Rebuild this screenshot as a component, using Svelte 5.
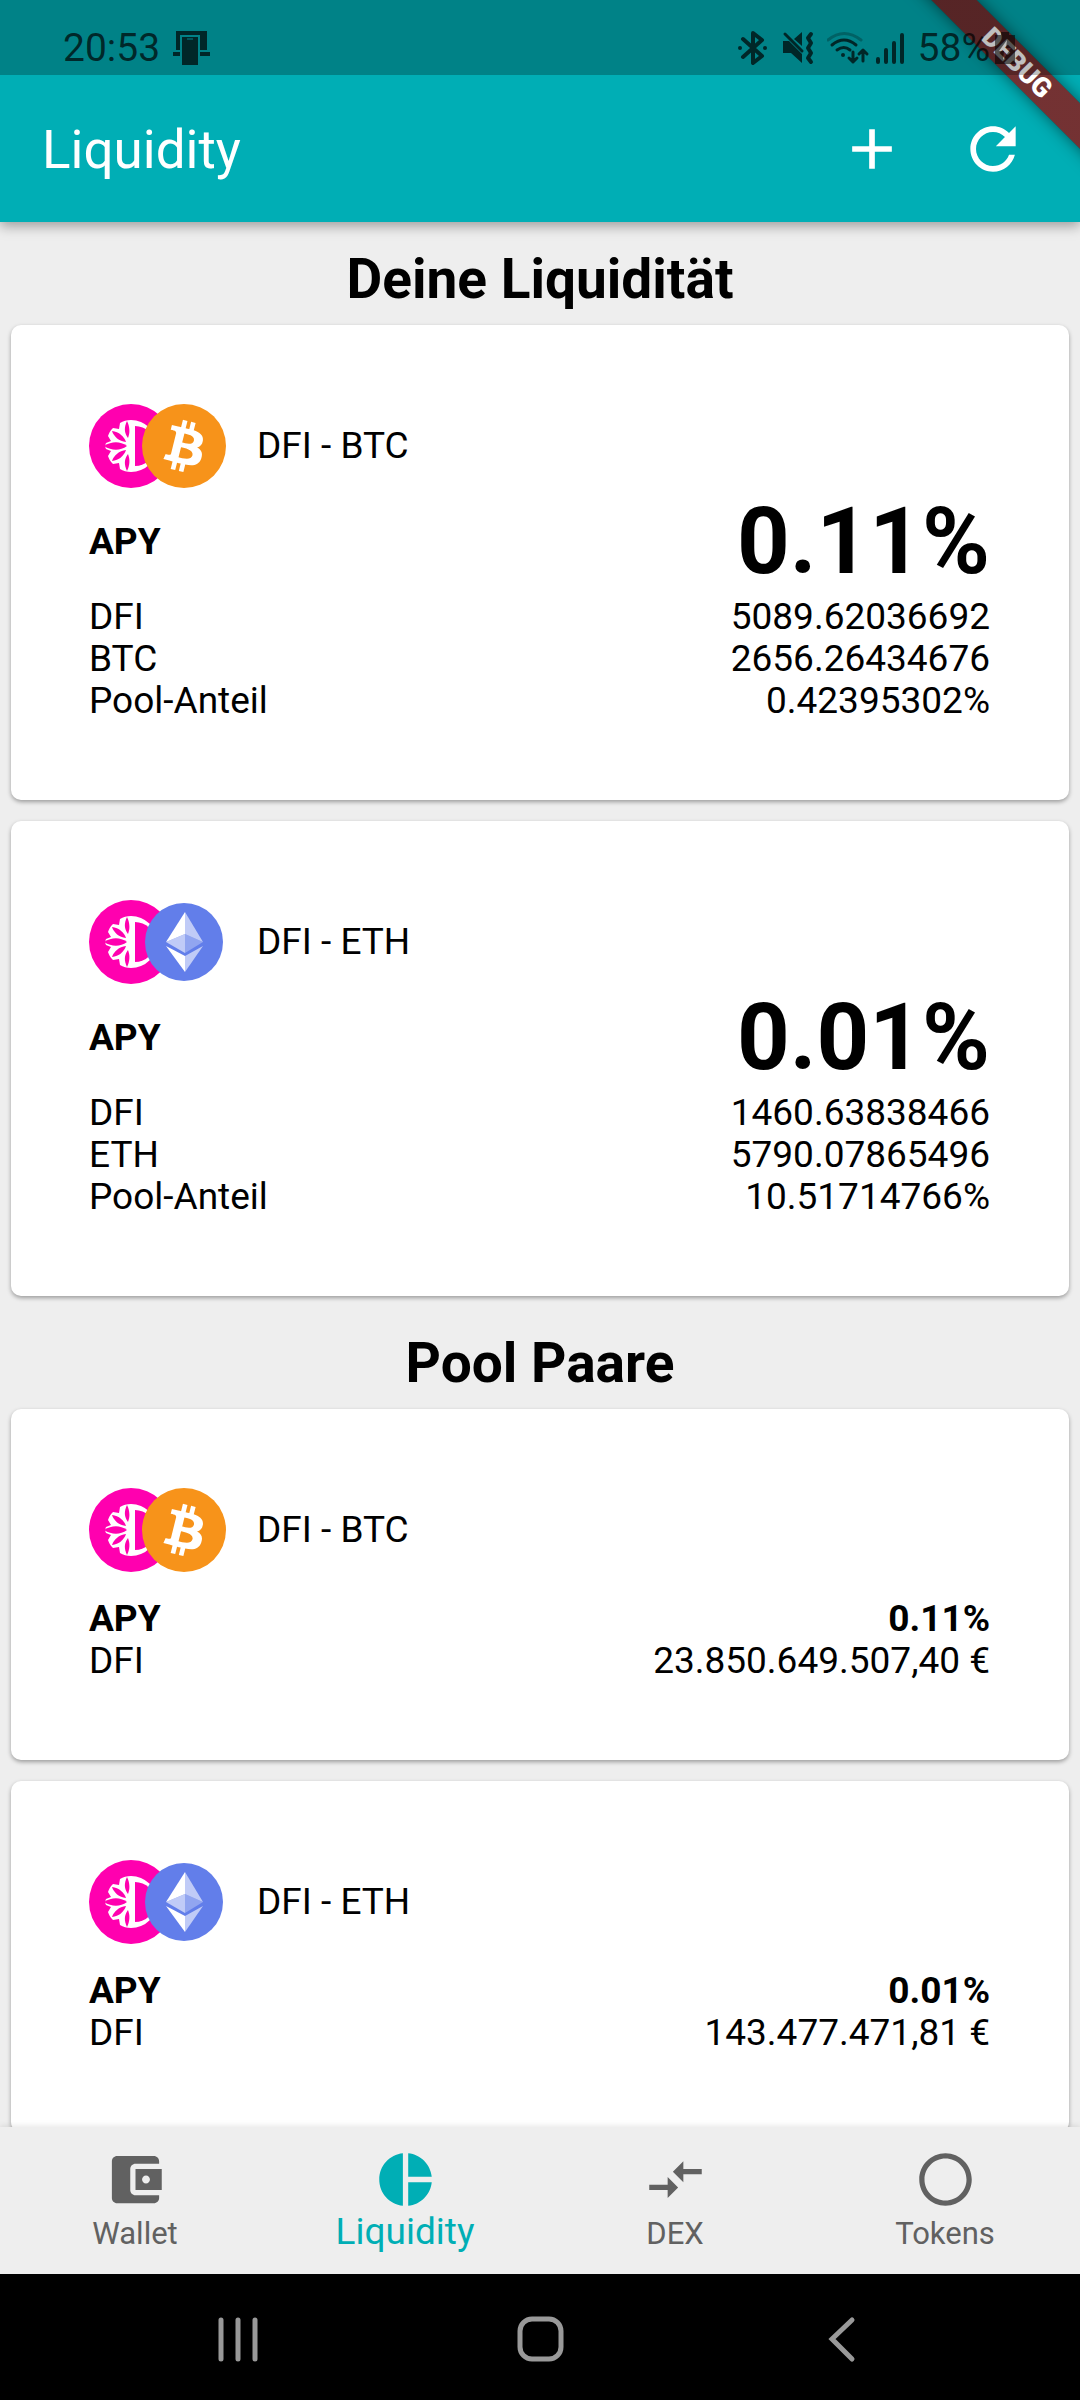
<script>
  const myPools = [
    {
      coin: "BTC",
      apy: "0.11%",
      rows: [
        ["DFI", "5089.62036692"],
        ["BTC", "2656.26434676"],
        ["Pool-Anteil", "0.42395302%"],
      ],
    },
    {
      coin: "ETH",
      apy: "0.01%",
      rows: [
        ["DFI", "1460.63838466"],
        ["ETH", "5790.07865496"],
        ["Pool-Anteil", "10.51714766%"],
      ],
    },
  ];

  const poolPairs = [
    { coin: "BTC", apy: "0.11%", rows: [["DFI", "23.850.649.507,40 €"]] },
    { coin: "ETH", apy: "0.01%", rows: [["DFI", "143.477.471,81 €"]] },
  ];

  const tabs = [
    {
      label: "Wallet",
      icon: "M21 18v1c0 1.1-.9 2-2 2H5c-1.11 0-2-.9-2-2V5c0-1.1.89-2 2-2h14c1.1 0 2 .9 2 2v1h-9c-1.11 0-2 .9-2 2v8c0 1.1.89 2 2 2h9zm-9-2h10V8H12v8zm4-2.5c-.83 0-1.5-.67-1.5-1.5s.67-1.5 1.5-1.5 1.5.67 1.5 1.5-.67 1.5-1.5 1.5z",
    },
    {
      label: "Liquidity",
      icon: "M11 2v20c-5.07-.5-9-4.79-9-10s3.93-9.5 9-10zm2.03 0v8.99H22c-.47-4.74-4.24-8.52-8.97-8.99zm0 11.01V22c4.74-.47 8.5-4.25 8.97-8.99h-8.97z",
    },
    {
      label: "DEX",
      icon: "M9.01 14H2v2h7.01v3L13 15l-3.99-4v3zm5.98-1v-3H22V8h-7.01V5L11 9l3.99 4z",
    },
    {
      label: "Tokens",
      icon: "M12 2C6.47 2 2 6.47 2 12s4.47 10 10 10 10-4.47 10-10S17.53 2 12 2zm0 18c-4.41 0-8-3.59-8-8s3.59-8 8-8 8 3.59 8 8-3.59 8-8 8z",
    },
  ];

  let active = $state("Liquidity");
</script>

{#snippet coins(coin)}
  <div class="coins">
    <svg class="coin" viewBox="0 0 84 84" aria-hidden="true">
      <circle cx="42" cy="42" r="42" fill="#ff00af" />
      <path d="M42 16a26 26 0 0 1 0 52z" fill="#fff" />
      <path d="M46 22a20 20 0 0 1 0 40z" fill="#ff00af" />
      <path
        fill="#fff"
        d="M42 16v52c-4 0-8-1-11-3l-1-6-6 1c-3-3-4-5-5-8l3-5-5-2c-1-2-1-4 0-6l5-2-3-5c1-3 2-5 5-8l6 1 1-6c3-2 7-3 11-3z"
      />
      <g fill="#ff00af">
        <path d="M15 42c8-5 16-5 23 0-7 5-15 5-23 0z" />
        <path d="M23 27c7 1 12 5 14 11-7-1-12-5-14-11z" />
        <path d="M23 57c7-1 12-5 14-11-7 1-12 5-14 11z" />
        <path d="M38 17c3 6 3 12 1 17-4-5-4-11-1-17z" />
        <path d="M38 67c3-6 3-12 1-17-4 5-4 11-1 17z" />
      </g>
    </svg>

    {#if coin === "BTC"}
      <svg class="coin coin--top" viewBox="0 0 32 32" aria-hidden="true">
        <circle cx="16" cy="16" r="16" fill="#f7931a" />
        <path
          fill="#fff"
          d="M23.189 14.02c.314-2.096-1.283-3.223-3.465-3.975l.708-2.84-1.728-.43-.69 2.765c-.454-.114-.92-.22-1.385-.326l.695-2.783L15.596 6l-.708 2.839c-.376-.086-.746-.17-1.104-.26l.002-.009-2.384-.595-.46 1.846s1.283.294 1.256.312c.7.175.826.638.805 1.006l-.806 3.235c.048.012.11.03.18.057l-.183-.045-1.13 4.532c-.086.212-.303.531-.793.41.018.025-1.256-.313-1.256-.313l-.858 1.978 2.25.561c.418.105.828.215 1.231.318l-.715 2.872 1.727.43.708-2.84c.472.127.93.245 1.378.357l-.706 2.828 1.728.43.715-2.866c2.948.558 5.164.333 6.097-2.333.752-2.146-.037-3.385-1.588-4.192 1.13-.26 1.98-1.003 2.207-2.538zm-3.95 5.538c-.533 2.147-4.148.986-5.32.695l.95-3.805c1.172.293 4.929.872 4.37 3.11zm.535-5.569c-.487 1.953-3.495.96-4.47.717l.86-3.45c.975.243 4.118.696 3.61 2.733z"
        />
      </svg>
    {:else}
      <svg class="coin coin--top" viewBox="0 0 84 84" aria-hidden="true">
        <circle cx="42" cy="42" r="39" fill="#627eea" />
        <g fill="#fff">
          <path fill-opacity=".6" d="M43 12v22l18 8z" />
          <path d="M43 12L24 42l19-8z" />
          <path fill-opacity=".6" d="M43 56v16l18-26z" />
          <path d="M43 72V56L24 46z" />
          <path fill-opacity=".3" d="M43 53l18-11-18-8z" />
          <path fill-opacity=".6" d="M24 42l19 11V34z" />
        </g>
      </svg>
    {/if}
    <span class="coins__label">DFI - {coin}</span>
  </div>
{/snippet}

{#snippet card(pool, large)}
  <article class="card">
    {@render coins(pool.coin)}
    <dl class="rows" class:rows--large={large}>
      <div class="row row--apy">
        <dt>APY</dt>
        <dd>{pool.apy}</dd>
      </div>
      {#each pool.rows as [name, value]}
        <div class="row">
          <dt>{name}</dt>
          <dd>{value}</dd>
        </div>
      {/each}
    </dl>
  </article>
{/snippet}

<div class="app">
  <header class="header">
    <div class="status">
      <span>20:53</span>
      <svg class="status__cast" width="38" height="36" viewBox="0 0 38 36" aria-hidden="true">
        <path d="M3 1h31v19h-7V5H7v15H3zM9 7h16v28H9zM0 22h7v4H0zM27 22h10v4H27z" />
        <path d="M14 9h6" stroke="#008288" />
      </svg>

      <svg width="44" height="36" viewBox="0 0 44 36" aria-hidden="true">
        <path class="line" d="M5 9l19 17-9 7V3l9 7L5 27" stroke-width="4" />
        <circle cx="2" cy="18" r="2" />
        <circle cx="27" cy="18" r="2" />
      </svg>
      <svg width="45" height="36" viewBox="0 0 45 36" aria-hidden="true">
        <path d="M1 11h6l13 13v9L9 23H1zM12 9l8-7v14z" />
        <path class="line" d="M3 4l17 17" stroke-width="3" />
        <path class="line" d="M29 4l-3 4 3 5-3 5 3 5-3 5 3 4" stroke-width="4" />
      </svg>
      <svg width="49" height="36" viewBox="0 0 49 36" aria-hidden="true">
        <path class="line" d="M1 10q16-13 33 0" stroke-width="3" opacity=".35" />
        <path class="line" d="M5 15q12-10 24 0M10 20q7-5 13 0" stroke-width="3" />
        <circle cx="16" cy="25" r="2" />
        <path class="line" d="M26 22v10m-4-4l4 4 4-4M36 31V20m-4 4l4-4 4 4" stroke-width="3" />
      </svg>
      <svg width="42" height="36" viewBox="0 0 42 36" aria-hidden="true">
        <path class="line" d="M2 29v3M10 20v12M18 13v19M26 5v27" stroke-width="4" />
      </svg>
      <span class="status__percent">58%</span>
      <svg width="20" height="36" viewBox="0 0 20 36" aria-hidden="true">
        <path fill-rule="evenodd" d="M6 2h8v3h6v29H0V5h6zM12 10L4 21h5l-1 9 8-12h-5z" opacity=".8" />
      </svg>
    </div>

    <div class="toolbar">
      <h1 class="toolbar__title">Liquidity</h1>
      <button class="toolbar__button" type="button" aria-label="Add">
        <svg viewBox="0 0 24 24" aria-hidden="true">
          <path d="M19 13h-6v6h-2v-6H5v-2h6V5h2v6h6v2z" />
        </svg>
      </button>
      <button class="toolbar__button" type="button" aria-label="Refresh">
        <svg viewBox="0 0 24 24" aria-hidden="true">
          <path
            d="M17.65 6.35C16.2 4.9 14.21 4 12 4c-4.42 0-7.99 3.58-7.99 8s3.57 8 7.99 8c3.73 0 6.84-2.55 7.73-6h-2.08c-.82 2.33-3.04 4-5.65 4-3.31 0-6-2.69-6-6s2.69-6 6-6c1.66 0 3.14.69 4.22 1.78L13 11h7V4l-2.35 2.35z"
          />
        </svg>
      </button>
    </div>

    <div class="corner">
      <div class="ribbon">DEBUG</div>
    </div>
  </header>

  <main class="content">
    <h2>Deine Liquidität</h2>
    {#each myPools as pool}
      {@render card(pool, true)}
    {/each}

    <h2>Pool Paare</h2>
    {#each poolPairs as pool}
      {@render card(pool, false)}
    {/each}
  </main>

  <nav class="tabs">
    {#each tabs as tab}
      <button
        class="tab"
        class:tab--active={active === tab.label}
        type="button"
        onclick={() => (active = tab.label)}
      >
        <svg viewBox="0 0 24 24" aria-hidden="true"><path d={tab.icon} /></svg>
        <span>{tab.label}</span>
      </button>
    {/each}
  </nav>

  <div class="system">
    <button type="button" aria-label="Recent apps">
      <svg viewBox="0 0 48 48" aria-hidden="true">
        <path d="M7 5v39M24 5v39M41 5v39" />
      </svg>
    </button>
    <button type="button" aria-label="Home">
      <svg viewBox="0 0 48 48" aria-hidden="true">
        <rect x="4" y="4" width="41" height="40" rx="12" />
      </svg>
    </button>
    <button type="button" aria-label="Back">
      <svg viewBox="0 0 48 48" aria-hidden="true">
        <path d="M34 5L14 24l20 20" />
      </svg>
    </button>
  </div>
</div>

<style>
  :global(body) {
    margin: 0;
  }

  .app {
    height: 100vh;
    display: flex;
    flex-direction: column;
    background-color: #eee;
    color: #000;
    font-family: Roboto, sans-serif;
    font-size: 37px;
    line-height: 42px;
  }

  svg {
    display: block;
    flex: none;
  }

  button {
    margin: 0;
    padding: 0;
    border: 0;
    background: none;
    font: inherit;
    color: inherit;
  }

  .header {
    position: relative;
    z-index: 1;
    background-color: #00aeb5;
    color: #fff;
    box-shadow: 0 4px 12px rgba(0, 0, 0, 0.35);
  }

  /* translucent, so the ribbon shows through it */
  .status {
    position: relative;
    z-index: 2;
    box-sizing: border-box;
    height: 75px;
    padding: 20px 65px 0 63px;
    display: flex;
    align-items: center;
    background-color: rgba(0, 0, 0, 0.25);
    color: rgba(0, 0, 0, 0.7);
    font-size: 39px;
    line-height: 46px;
  }

  .status svg {
    fill: currentColor;
  }

  .status .line {
    fill: none;
    stroke: currentColor;
    stroke-linejoin: round;
    stroke-linecap: round;
  }

  .status__cast {
    margin: 0 auto 0 13px;
  }

  .status__percent {
    margin-right: 5px;
  }

  .toolbar {
    height: 147px;
    padding: 0 27px 0 42px;
    display: flex;
    align-items: center;
  }

  .toolbar__title {
    flex: 1;
    margin: 0;
    padding-top: 3px;
    font-size: 53px;
    font-weight: 400;
    line-height: 62px;
  }

  .toolbar__button {
    width: 121px;
    height: 121px;
    display: grid;
    place-items: center;
  }

  .toolbar__button svg {
    width: 68px;
    height: 68px;
    fill: currentColor;
  }

  .corner {
    position: absolute;
    top: 0;
    right: 0;
    width: 200px;
    height: 200px;
    overflow: hidden;
    pointer-events: none;
  }

  .ribbon {
    position: absolute;
    top: 47px;
    right: -87px;
    width: 300px;
    transform: rotate(45deg);
    background:
      linear-gradient(rgba(183, 28, 28, 0.63), rgba(183, 28, 28, 0.63)),
      rgba(0, 0, 0, 0.5);
    box-shadow: 0 0 16px rgba(0, 0, 0, 0.5);
    font-size: 27px;
    font-weight: 900;
    line-height: 32px;
    text-align: center;
  }

  .content {
    flex: 1;
    min-height: 0;
    display: flex;
    flex-direction: column;
    overflow-y: auto;
    scrollbar-width: none;
  }

  h2 {
    margin: 0;
    padding: 24px 0 2px;
    font-size: 55px;
    font-weight: 700;
    line-height: 66px;
    text-align: center;
  }

  .card {
    flex: none;
    margin: 11px 11px 10px;
    padding: 79px 79px 78px 78px;
    border-radius: 10px;
    background-color: #fff;
    box-shadow: 0 2px 4px rgba(0, 0, 0, 0.35);
  }

  .coins {
    display: flex;
    align-items: center;
  }

  .coin {
    width: 84px;
    height: 84px;
  }

  .coin--top {
    margin-left: -31px;
  }

  .coins__label {
    margin-left: 31px;
  }

  .rows {
    margin: 26px 0 0;
  }

  .rows--large {
    margin-top: 0;
  }

  .row {
    display: flex;
    align-items: center;
    justify-content: space-between;
  }

  .row dd {
    margin: 0;
  }

  .row--apy {
    font-weight: 700;
  }

  .rows--large .row--apy dd {
    font-size: 92px;
    line-height: 108px;
  }

  .tabs {
    position: relative;
    display: flex;
    background-color: #eee;
    box-shadow: 0 -1px 6px rgba(0, 0, 0, 0.1);
  }

  .tab {
    flex: 1;
    padding: 21px 0 17px;
    display: flex;
    flex-direction: column;
    align-items: center;
    color: #616161;
    font-size: 31px;
    line-height: 46px;
  }

  .tab--active {
    color: #00aeb5;
    font-size: 37px;
    line-height: 42px;
  }

  .tab svg {
    width: 63px;
    height: 63px;
    fill: currentColor;
  }

  .system {
    box-sizing: border-box;
    height: 126px;
    padding: 4px 87px 0;
    display: flex;
    background-color: #000;
  }

  .system button {
    flex: 1;
    display: grid;
    place-items: center;
  }

  .system svg {
    width: 48px;
    height: 48px;
    fill: none;
    stroke: #999;
    stroke-width: 5;
    stroke-linecap: round;
  }
</style>
